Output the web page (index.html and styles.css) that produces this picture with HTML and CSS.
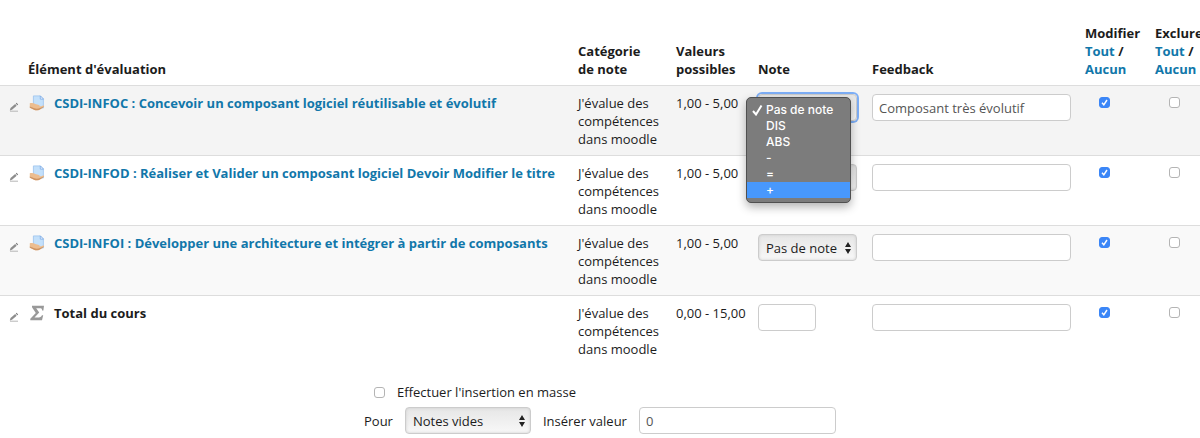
FILE: index.html
```html
<!DOCTYPE html>
<html lang="fr">

<head>
    <meta charset="UTF-8">
    <title>Vue simple des notes</title>
    <meta name="viewport" content="width=device-width,initial-scale=1">
    <link rel="stylesheet" href="styles.css">
</head>

<body>

    <!-- icons shared by the rows -->
    <svg class="sprite" aria-hidden="true">
        <symbol id="i-edit" viewBox="0 0 10 10">
            <path d="M1 9.2h8" stroke="#b5b5b5" stroke-width="1" fill="none" />
            <path d="M.8 8.6l.7-2.5L6.2 2l1.5 1.7L3 7.8z" fill="#8d8d8d" />
            <path d="M6.8 1.5l.8-.7 1.5 1.7-.8.7z" fill="#777" />
        </symbol>
        <symbol id="i-assign" viewBox="0 0 16 16">
            <path d="M4.4.9h7l3 3V13h-10z" fill="#c3e0fb" stroke="#9cc3ef" stroke-width=".8" />
            <path d="M11.3.9v3.2h3.2z" fill="#eef7ff" stroke="#7eabe6" stroke-width=".8" />
            <path d="M.8 8.3c2-.8 4-.3 5.5.8l3.700.9c.8.3.8 1.300 0 1.300h2.400l1.600-.8c1.200-.3 1.500.8.7 1.500l-3.500 2.300c-1.600 1.100-4.200 1.300-5.700.6L.8 12.600z" fill="#ecbd90" />
            <path d="M.8 11.400l4.600 1.900c1.900.7 4.200.4 5.600-.4l3.900-1.500c-.4.900-2.700 2.300-3.900 3-1.500 1-4 1.200-5.400.5L.8 12.700z" fill="#cf9463" />
        </symbol>
        <symbol id="i-sum" viewBox="0 0 16 16">
            <path d="M3 .8h12l-.6 4.600h-1.300c0-1.700-.6-2.200-2-2.200H7.200l3 4.300-4.700 4.900h4.300c1.700 0 2.500-.6 3.100-2.100h1.300L13 15.200H1.300v-1.500l5.500-5.800L3 2.300z" fill="#999" />
        </symbol>
    </svg>

    <form class="grade-form">
        <table class="grades">
            <colgroup>
                <col class="c-edit">
                <col>
                <col class="c-category">
                <col class="c-range">
                <col class="c-grade">
                <col class="c-feedback">
                <col class="c-override">
                <col class="c-exclude">
            </colgroup>
            <thead>
                <tr>
                    <th></th>
                    <th>Élément d'évaluation</th>
                    <th class="category">Catégorie de note</th>
                    <th>Valeurs possibles</th>
                    <th>Note</th>
                    <th>Feedback</th>
                    <th>Modifier <br><a href="#">Tout</a> / <br><a href="#">Aucun</a></th>
                    <th>Exclure <br><a href="#">Tout</a> / <br><a href="#">Aucun</a></th>
                </tr>
            </thead>
            <tbody>
                <tr class="hover">
                    <td><a class="edit" href="#" aria-label="Modifier"><svg><use href="#i-edit" /></svg></a></td>
                    <td class="item"><svg class="icon"><use href="#i-assign" /></svg><a href="#">CSDI-INFOC : Concevoir un composant logiciel réutilisable et évolutif</a></td>
                    <td>J'évalue des compétences dans moodle</td>
                    <td>1,00 - 5,00</td>
                    <td>
                        <div class="select-box">
                            <select class="focused" aria-label="Note CSDI-INFOC">
                                <option>Pas de note</option>
                                <option>DIS</option>
                                <option>ABS</option>
                                <option>-</option>
                                <option>=</option>
                                <option>+</option>
                            </select>
                            <ul class="menu" role="listbox" aria-label="Note">
                                <li role="option" aria-selected="true" class="checked">Pas de note</li>
                                <li role="option">DIS</li>
                                <li role="option">ABS</li>
                                <li role="option">-</li>
                                <li role="option">=</li>
                                <li role="option" class="active">+</li>
                            </ul>
                        </div>
                    </td>
                    <td><input type="text" class="text" value="Composant très évolutif" aria-label="Feedback CSDI-INFOC"></td>
                    <td class="check"><input type="checkbox" checked aria-label="Modifier CSDI-INFOC"></td>
                    <td class="check"><input type="checkbox" aria-label="Exclure CSDI-INFOC"></td>
                </tr>
                <tr>
                    <td><a class="edit" href="#" aria-label="Modifier"><svg><use href="#i-edit" /></svg></a></td>
                    <td class="item"><svg class="icon"><use href="#i-assign" /></svg><a href="#">CSDI-INFOD : Réaliser et Valider un composant logiciel Devoir Modifier le titre</a></td>
                    <td>J'évalue des compétences dans moodle</td>
                    <td>1,00 - 5,00</td>
                    <td>
                        <select aria-label="Note CSDI-INFOD">
                            <option>Pas de note</option>
                        </select>
                    </td>
                    <td><input type="text" class="text" aria-label="Feedback CSDI-INFOD"></td>
                    <td class="check"><input type="checkbox" checked aria-label="Modifier CSDI-INFOD"></td>
                    <td class="check"><input type="checkbox" aria-label="Exclure CSDI-INFOD"></td>
                </tr>
                <tr class="odd">
                    <td><a class="edit" href="#" aria-label="Modifier"><svg><use href="#i-edit" /></svg></a></td>
                    <td class="item"><svg class="icon"><use href="#i-assign" /></svg><a href="#">CSDI-INFOI : Développer une architecture et intégrer à partir de composants</a></td>
                    <td>J'évalue des compétences dans moodle</td>
                    <td>1,00 - 5,00</td>
                    <td>
                        <select aria-label="Note CSDI-INFOI">
                            <option>Pas de note</option>
                        </select>
                    </td>
                    <td><input type="text" class="text" aria-label="Feedback CSDI-INFOI"></td>
                    <td class="check"><input type="checkbox" checked aria-label="Modifier CSDI-INFOI"></td>
                    <td class="check"><input type="checkbox" aria-label="Exclure CSDI-INFOI"></td>
                </tr>
                <tr>
                    <td><a class="edit" href="#" aria-label="Modifier"><svg><use href="#i-edit" /></svg></a></td>
                    <td class="item"><svg class="icon"><use href="#i-sum" /></svg>Total du cours</td>
                    <td>J'évalue des compétences dans moodle</td>
                    <td>0,00 - 15,00</td>
                    <td><input type="text" class="text short" aria-label="Note du cours"></td>
                    <td><input type="text" class="text" aria-label="Feedback du cours"></td>
                    <td class="check"><input type="checkbox" checked aria-label="Modifier le total"></td>
                    <td class="check"><input type="checkbox" aria-label="Exclure le total"></td>
                </tr>
            </tbody>
        </table>

        <div class="bulk">
            <div class="bulk-row bulk-check">
                <input type="checkbox" id="bulk">
                <label for="bulk">Effectuer l'insertion en masse</label>
            </div>
            <div class="bulk-row">
                <label for="bulk-for">Pour</label>
                <select id="bulk-for">
                    <option>Notes vides</option>
                </select>
                <label for="bulk-value">Insérer valeur</label>
                <input type="text" class="text" id="bulk-value" value="0">
            </div>
        </div>
    </form>

</body>

</html>
```
FILE: styles.css
```css
* {
    box-sizing: border-box;
}

body {
    margin: 0;
    overflow-x: hidden;
    background: #fff;
    color: #1c1c1c;
    font: 13px/18px "Open Sans", sans-serif;
}

a {
    color: #1177aa;
    text-decoration: none;
}

.sprite {
    display: none;
}

.grade-form {
    padding-top: 17px;
}

/* table */
.grades {
    width: 100%;
    table-layout: fixed;
    border-collapse: separate;
    border-spacing: 0;
}

.c-edit { width: 28px; }
.c-category { width: 98px; }
.c-range { width: 82px; }
.c-grade { width: 114px; }
.c-feedback { width: 213px; }
.c-override { width: 70px; }
.c-exclude { width: 45px; }

.grades th {
    padding: 7px 0;
    text-align: left;
    vertical-align: bottom;
    font-weight: 700;
}

.grades td {
    padding: 8px 0 7px;
    vertical-align: top;
    border-top: 1px solid #ddd;
}

.grades .category {
    padding-right: 24px;
}

.grades .hover td {
    background: #f4f4f4;
}

.grades .odd td {
    background: #f9f9f9;
}

.grades .item {
    font-weight: 700;
    white-space: nowrap;
}

.icon {
    width: 16px;
    height: 16px;
    margin: 1px 9px 0 1px;
    vertical-align: top;
}

.edit {
    display: block;
    padding: 8px 0 0 9px;
}

.edit svg {
    display: block;
    width: 10px;
    height: 10px;
}

.grades .check {
    padding-left: 14px;
}

/* controls */
input,
select {
    margin: 0;
    font: inherit;
    color: #555;
}

.text {
    display: block;
    width: 199px;
    height: 27px;
    padding: 0 6px;
    border: 1px solid #ccc;
    border-radius: 4px;
    background: #fff;
}

.text.short {
    width: 58px;
}

select {
    display: block;
    width: 99px;
    height: 27px;
    padding: 0 7px;
    appearance: none;
    color: #1c1c1c;
    border: 1px solid #ccc;
    border-radius: 4px;
    background: url("data:image/svg+xml,%3Csvg xmlns='http://www.w3.org/2000/svg' width='6' height='12'%3E%3Cpath d='M0 5l3-5 3 5zM0 7l3 5 3-5z' fill='%23222'/%3E%3C/svg%3E") right 5px center no-repeat, linear-gradient(#e6e6e6, #f8f8f8);
    box-shadow: inset 0 0 3px #ccc;
}

select.focused {
    box-shadow: 0 0 0 2px #7daef5;
}

input[type="checkbox"] {
    display: block;
    width: 11px;
    height: 11px;
    margin-top: 3px;
    appearance: none;
    border: 1px solid #b4b4b4;
    border-radius: 3px;
    background: #fff;
}

input[type="checkbox"]:checked {
    border-color: #3b86f7;
    background: #3b86f7 url("data:image/svg+xml,%3Csvg xmlns='http://www.w3.org/2000/svg' width='9' height='9'%3E%3Cpath d='M2 4.8l1.8 2L7 2' fill='none' stroke='%23fff' stroke-width='1.5'/%3E%3C/svg%3E") center no-repeat;
}

/* open list of the first select */
.select-box {
    position: relative;
}

.menu {
    position: absolute;
    top: 3px;
    left: -12px;
    z-index: 10;
    width: 105px;
    margin: 0;
    padding: 4px 0;
    list-style: none;
    color: #fff;
    font: 500 12px/16px Inter, sans-serif;
    border: 1px solid #505050;
    border-radius: 5px;
    background: #7c7c7c;
    box-shadow: 0 4px 10px rgba(0, 0, 0, .3);
}

.menu li {
    padding-left: 19px;
    white-space: nowrap;
}

.menu .checked {
    background: url("data:image/svg+xml,%3Csvg xmlns='http://www.w3.org/2000/svg' width='11' height='12'%3E%3Cpath d='M1 7l3 3.5L9.5 1.5' fill='none' stroke='%23fff' stroke-width='2'/%3E%3C/svg%3E") 5px center no-repeat;
}

.menu .active {
    background: #4898fc;
}

/* bulk insert */
.bulk {
    display: flex;
    flex-direction: column;
    gap: 6px;
    max-width: 472px;
    margin: 18px auto 0;
}

.bulk-row {
    display: flex;
    align-items: center;
    gap: 12px;
    white-space: nowrap;
}

.bulk-check {
    padding-left: 10px;
}

.bulk-check input[type="checkbox"] {
    margin-top: 0;
}

.bulk select {
    flex: none;
    width: 126px;
}

.bulk .text {
    flex: 1;
    min-width: 0;
}
```
